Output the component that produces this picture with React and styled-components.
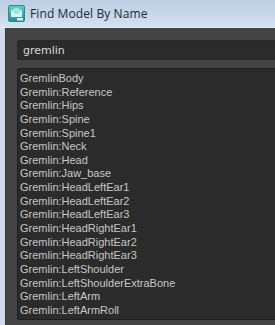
import React from 'react';
import styled, { createGlobalStyle } from 'styled-components';

const GlobalStyle = createGlobalStyle`
  html, body {
    margin: 0;
    padding: 0;
    background: #cfdeee;
  }
`;

const Window = styled.div`
  width: 275px;
  height: 325px;
  overflow: hidden;
  display: flex;
  flex-direction: column;
  background: #cddcec;
`;

const TitleBar = styled.div`
  height: 28px;
  flex-shrink: 0;
  display: flex;
  align-items: center;
  gap: 5px;
  padding-left: 8px;
  background: linear-gradient(to bottom, #bccfe4 0%, #c9d8ea 60%, #d4e2f0 100%);
  border-bottom: 1px solid #e4eef8;
  box-sizing: border-box;
`;

const Title = styled.span`
  font-family: "Open Sans", "Noto Sans", sans-serif;
  font-size: 12px;
  color: #1c2a3a;
  letter-spacing: 0.1px;
`;

const Body = styled.div`
  flex: 1;
  margin-left: 5px;
  background: #444444;
  border-left: 1px solid #3a3a3a;
  padding: 12px 0 0 11px;
  display: flex;
  flex-direction: column;
  gap: 8px;
  min-height: 0;
`;

const SearchField = styled.div`
  height: 20px;
  margin-right: -4px;
  box-sizing: border-box;
  background: #2b2b2b;
  border: 1px solid #262626;
  border-radius: 2px;
  padding-left: 5px;
  display: flex;
  align-items: center;
  font-family: Tahoma, "DejaVu Sans", sans-serif;
  font-size: 11px;
  color: #dcdcdc;
`;

const List = styled.ul`
  list-style: none;
  margin: 0 -4px 0 0;
  padding: 3px 0 0 2px;
  height: 252px;
  flex-shrink: 0;
  box-sizing: border-box;
  overflow: hidden;
  background: #2b2b2b;
  border: 1px solid #1e1e1e;
  border-radius: 2px 0 0 2px;
`;

const Row = styled.li`
  height: 13.65px;
  line-height: 13.65px;
  font-family: "Liberation Sans", Arial, sans-serif;
  font-size: 11px;
  color: #c8c8c8;
  white-space: nowrap;
`;

const MayaIcon = () => (
  <svg width="17" height="17" viewBox="0 0 17 17">
    <defs>
      <linearGradient id="mg" x1="0" y1="0" x2="0" y2="1">
        <stop offset="0" stopColor="#5fd0c8" />
        <stop offset="1" stopColor="#1a8f8c" />
      </linearGradient>
    </defs>
    <rect x="0.5" y="0.5" width="16" height="16" rx="1.5" fill="url(#mg)" stroke="#2a8c8a" />
    <path d="M3 12 L3 5 L8.5 9 L14 5 L14 12 Z" fill="#e8fbfa" opacity="0.9" />
    <path d="M3 5 L8.5 2.5 L14 5 L8.5 9 Z" fill="#9fe8e2" />
    <rect x="9" y="13" width="6" height="2.5" fill="#dfe8ea" />
  </svg>
);

const names = [
  'GremlinBody',
  'Gremlin:Reference',
  'Gremlin:Hips',
  'Gremlin:Spine',
  'Gremlin:Spine1',
  'Gremlin:Neck',
  'Gremlin:Head',
  'Gremlin:Jaw_base',
  'Gremlin:HeadLeftEar1',
  'Gremlin:HeadLeftEar2',
  'Gremlin:HeadLeftEar3',
  'Gremlin:HeadRightEar1',
  'Gremlin:HeadRightEar2',
  'Gremlin:HeadRightEar3',
  'Gremlin:LeftShoulder',
  'Gremlin:LeftShoulderExtraBone',
  'Gremlin:LeftArm',
  'Gremlin:LeftArmRoll',
  'Gremlin:LeftForeArm',
];

const App = () => {
  return (
    <>
      <GlobalStyle />
      <Window>
        <TitleBar>
          <MayaIcon />
          <Title>Find Model By Name</Title>
        </TitleBar>
        <Body>
          <SearchField>gremlin</SearchField>
          <List>
            {names.map((n, i) => <Row key={i}>{n}</Row>)}
          </List>
        </Body>
      </Window>
    </>
  );
};

export default App;
